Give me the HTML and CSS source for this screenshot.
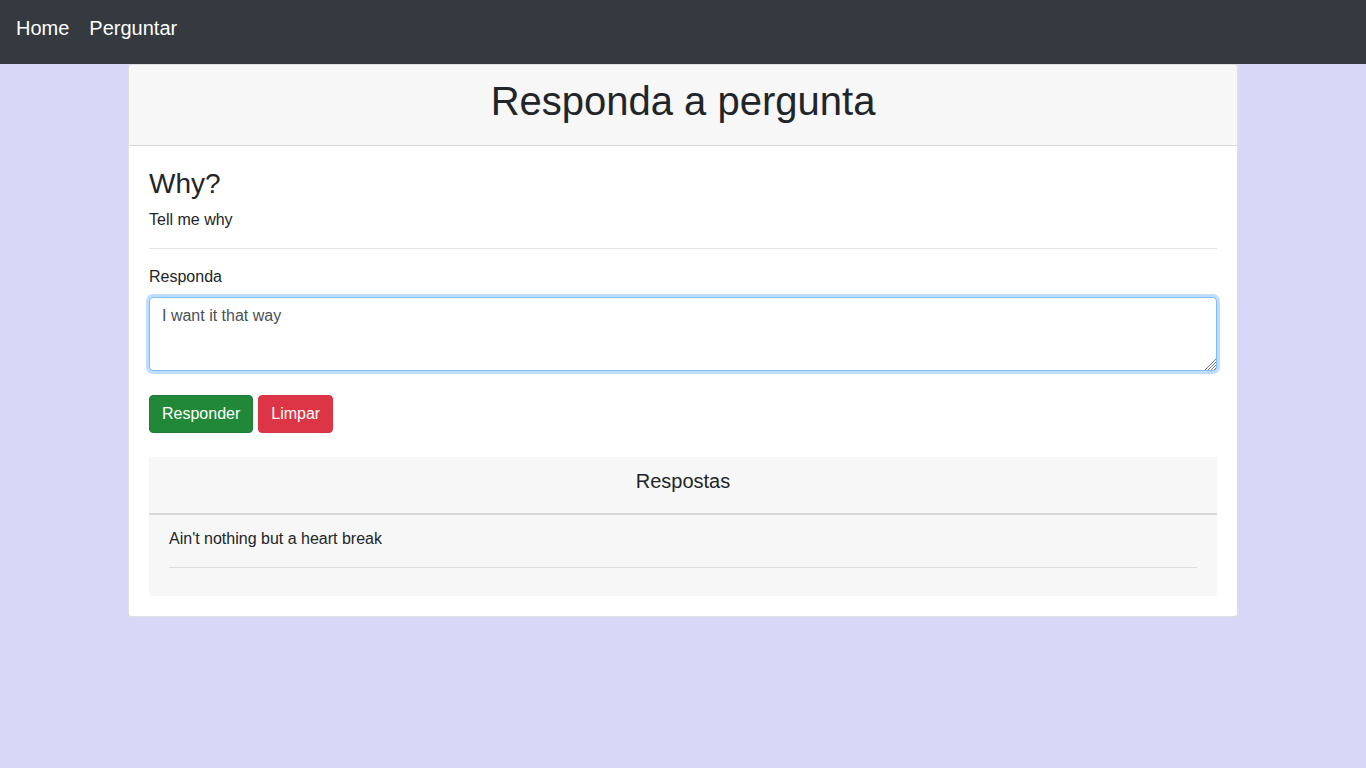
FILE: index.html
```html
<!DOCTYPE html>
<html lang="pt-BR">
<head>
  <meta charset="utf-8">
  <meta name="viewport" content="width=device-width, initial-scale=1">
  <title>Responda a pergunta</title>
  <link rel="stylesheet" href="styles.css">
</head>
<body>
  <nav class="navbar">
    <a class="navbar-link" href="#">Home</a>
    <a class="navbar-link" href="#">Perguntar</a>
  </nav>
  <main class="container">
    <div class="card">
      <header class="card-header">
        <h1 class="page-title">Responda a pergunta</h1>
      </header>
      <div class="card-body">
        <h3 class="question-title">Why?</h3>
        <p class="question-text">Tell me why</p>
        <hr class="divider">
        <form class="answer-form">
          <label class="form-label" for="answer">Responda</label>
          <div class="field">
            <textarea class="form-control" id="answer" name="answer">I want it that way</textarea>
            <svg class="grip" width="11" height="11" viewBox="0 0 11 11" fill="none" aria-hidden="true">
              <path d="M0 11L11 0M3 11L11 3M6 11L11 6M9 11L11 9" stroke="#777"/>
            </svg>
          </div>
          <div class="actions">
            <button class="btn btn-success" type="submit">Responder</button>
            <button class="btn btn-danger" type="reset">Limpar</button>
          </div>
        </form>
        <section class="answers">
          <header class="answers-header">
            <h5 class="answers-title">Respostas</h5>
          </header>
          <div class="answers-body">
            <p class="answer-text">Ain't nothing but a heart break</p>
            <hr class="divider">
          </div>
        </section>
      </div>
    </div>
  </main>
</body>
</html>
```

FILE: styles.css
```css
*,
*::before,
*::after {
  box-sizing: border-box;
}

body {
  margin: 0;
  background: #d8d7f7;
  color: #212529;
  font-family: "Liberation Sans", Arial, sans-serif;
  font-size: 16px;
  line-height: 24px;
}

h1,
h3,
h5,
p {
  margin: 0 0 8px;
  font-weight: 400;
}

.navbar {
  display: flex;
  gap: 20px;
  padding: 13px 16px 21px;
  background: #343a40;
}

.navbar-link {
  color: #fff;
  font-size: 20px;
  line-height: 30px;
  text-decoration: none;
}

.container {
  max-width: 1140px;
  margin: 0 auto;
  padding: 0 15px;
}

.card {
  background: #fff;
  background-clip: border-box;
  border: 1px solid rgba(0, 0, 0, 0.125);
  border-radius: 4px;
}

.card-header {
  padding: 12px 20px;
  background: rgba(0, 0, 0, 0.03);
  border-bottom: 1px solid rgba(0, 0, 0, 0.125);
  border-radius: 3px 3px 0 0;
  text-align: center;
}

.page-title {
  font-size: 40px;
  line-height: 48px;
}

.card-body {
  padding: 20px;
}

.question-title {
  margin-bottom: 6px;
  font-size: 28px;
  line-height: 36px;
}

.question-text,
.answer-text {
  margin-bottom: 16px;
}

.divider {
  margin: 16px 0;
  border: 0;
  border-top: 1px solid rgba(0, 0, 0, 0.1);
}

.form-label {
  display: block;
  margin-bottom: 8px;
}

.field {
  position: relative;
}

.form-control {
  display: block;
  width: 100%;
  height: 74px;
  padding: 6px 12px;
  overflow: auto;
  resize: vertical;
  color: #495057;
  background: #fff;
  border: 1px solid #80bdff;
  border-radius: 4px;
  outline: 0;
  box-shadow: 0 0 0 3px rgba(0, 123, 255, 0.25);
  font: inherit;
}

.form-control::-webkit-resizer {
  background: transparent;
}

.grip {
  position: absolute;
  right: 1px;
  bottom: 1px;
  pointer-events: none;
}

.actions {
  display: flex;
  gap: 5px;
  margin: 24px 0;
}

.btn {
  padding: 6px 12px;
  border: 1px solid transparent;
  border-radius: 4px;
  color: #fff;
  font: inherit;
  cursor: pointer;
}

.btn-success {
  background: #218838;
  border-color: #1e7e34;
}

.btn-danger {
  background: #dc3545;
  border-color: #dc3545;
}

.answers {
  background: #f7f7f7;
  border-radius: 0 0 3px 3px;
}

.answers-header {
  padding: 12px 20px;
  border-bottom: 2px solid rgba(0, 0, 0, 0.125);
  text-align: center;
}

.answers-title {
  font-size: 20px;
}

.answers-body {
  padding: 12px 20px;
}
```
